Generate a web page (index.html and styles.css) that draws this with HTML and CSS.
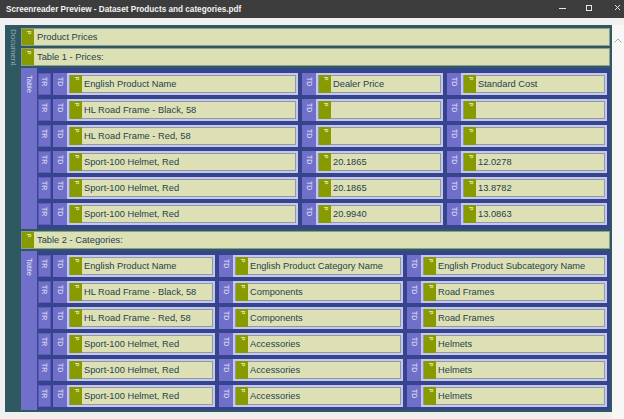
FILE: index.html
```html
<!DOCTYPE html>
<html>
<head>
<meta charset="utf-8">
<link rel="stylesheet" href="styles.css">
</head>
<body>
<div class="titlebar">
  <span class="title">Screenreader Preview - Dataset Products and categories.pdf</span>
  <svg class="controls" width="80" height="18" viewBox="0 0 80 18">
    <line x1="15" y1="8.5" x2="22" y2="8.5" stroke="#e6e6e6" stroke-width="1"/>
    <rect x="42.5" y="5.5" width="5" height="5" fill="none" stroke="#e6e6e6" stroke-width="1"/>
    <path d="M71 5 L76 10 M76 5 L71 10" stroke="#e6e6e6" stroke-width="1"/>
  </svg>
</div>
<div class="workspace">
  <div class="docwrap">
    <div class="doc">
      <div class="vlabel doc-label"><span>Document</span></div>
      <div class="doc-body">
        <div class="para"><span class="pi"><span>P</span></span><span class="ptext">Product Prices</span></div>
        <div class="para"><span class="pi"><span>P</span></span><span class="ptext">Table 1 - Prices:</span></div>
        <div class="table t1">
          <div class="vlabel tlabel"><span>Table</span></div>
          <div class="rows">
            <div class="tr"><div class="vlabel trlabel"><span>TR</span></div>
              <div class="td c1"><div class="vlabel tdlabel"><span>TD</span></div><div class="cell"><span class="pi"><span>P</span></span><span class="ctext">English Product Name</span></div></div>
              <div class="td c2"><div class="vlabel tdlabel"><span>TD</span></div><div class="cell"><span class="pi"><span>P</span></span><span class="ctext">Dealer Price</span></div></div>
              <div class="td c3"><div class="vlabel tdlabel"><span>TD</span></div><div class="cell"><span class="pi"><span>P</span></span><span class="ctext">Standard Cost</span></div></div>
            </div>
            <div class="tr"><div class="vlabel trlabel"><span>TR</span></div>
              <div class="td c1"><div class="vlabel tdlabel"><span>TD</span></div><div class="cell"><span class="pi"><span>P</span></span><span class="ctext">HL Road Frame - Black, 58</span></div></div>
              <div class="td c2"><div class="vlabel tdlabel"><span>TD</span></div><div class="cell"><span class="pi"><span>P</span></span><span class="ctext"></span></div></div>
              <div class="td c3"><div class="vlabel tdlabel"><span>TD</span></div><div class="cell"><span class="pi"><span>P</span></span><span class="ctext"></span></div></div>
            </div>
            <div class="tr"><div class="vlabel trlabel"><span>TR</span></div>
              <div class="td c1"><div class="vlabel tdlabel"><span>TD</span></div><div class="cell"><span class="pi"><span>P</span></span><span class="ctext">HL Road Frame - Red, 58</span></div></div>
              <div class="td c2"><div class="vlabel tdlabel"><span>TD</span></div><div class="cell"><span class="pi"><span>P</span></span><span class="ctext"></span></div></div>
              <div class="td c3"><div class="vlabel tdlabel"><span>TD</span></div><div class="cell"><span class="pi"><span>P</span></span><span class="ctext"></span></div></div>
            </div>
            <div class="tr"><div class="vlabel trlabel"><span>TR</span></div>
              <div class="td c1"><div class="vlabel tdlabel"><span>TD</span></div><div class="cell"><span class="pi"><span>P</span></span><span class="ctext">Sport-100 Helmet, Red</span></div></div>
              <div class="td c2"><div class="vlabel tdlabel"><span>TD</span></div><div class="cell"><span class="pi"><span>P</span></span><span class="ctext">20.1865</span></div></div>
              <div class="td c3"><div class="vlabel tdlabel"><span>TD</span></div><div class="cell"><span class="pi"><span>P</span></span><span class="ctext">12.0278</span></div></div>
            </div>
            <div class="tr"><div class="vlabel trlabel"><span>TR</span></div>
              <div class="td c1"><div class="vlabel tdlabel"><span>TD</span></div><div class="cell"><span class="pi"><span>P</span></span><span class="ctext">Sport-100 Helmet, Red</span></div></div>
              <div class="td c2"><div class="vlabel tdlabel"><span>TD</span></div><div class="cell"><span class="pi"><span>P</span></span><span class="ctext">20.1865</span></div></div>
              <div class="td c3"><div class="vlabel tdlabel"><span>TD</span></div><div class="cell"><span class="pi"><span>P</span></span><span class="ctext">13.8782</span></div></div>
            </div>
            <div class="tr"><div class="vlabel trlabel"><span>TR</span></div>
              <div class="td c1"><div class="vlabel tdlabel"><span>TD</span></div><div class="cell"><span class="pi"><span>P</span></span><span class="ctext">Sport-100 Helmet, Red</span></div></div>
              <div class="td c2"><div class="vlabel tdlabel"><span>TD</span></div><div class="cell"><span class="pi"><span>P</span></span><span class="ctext">20.9940</span></div></div>
              <div class="td c3"><div class="vlabel tdlabel"><span>TD</span></div><div class="cell"><span class="pi"><span>P</span></span><span class="ctext">13.0863</span></div></div>
            </div>
          </div>
        </div>
        <div class="para"><span class="pi"><span>P</span></span><span class="ptext">Table 2 - Categories:</span></div>
        <div class="table t2">
          <div class="vlabel tlabel"><span>Table</span></div>
          <div class="rows">
            <div class="tr"><div class="vlabel trlabel"><span>TR</span></div>
              <div class="td c1"><div class="vlabel tdlabel"><span>TD</span></div><div class="cell"><span class="pi"><span>P</span></span><span class="ctext">English Product Name</span></div></div>
              <div class="td c2"><div class="vlabel tdlabel"><span>TD</span></div><div class="cell"><span class="pi"><span>P</span></span><span class="ctext">English Product Category Name</span></div></div>
              <div class="td c3"><div class="vlabel tdlabel"><span>TD</span></div><div class="cell"><span class="pi"><span>P</span></span><span class="ctext">English Product Subcategory Name</span></div></div>
            </div>
            <div class="tr"><div class="vlabel trlabel"><span>TR</span></div>
              <div class="td c1"><div class="vlabel tdlabel"><span>TD</span></div><div class="cell"><span class="pi"><span>P</span></span><span class="ctext">HL Road Frame - Black, 58</span></div></div>
              <div class="td c2"><div class="vlabel tdlabel"><span>TD</span></div><div class="cell"><span class="pi"><span>P</span></span><span class="ctext">Components</span></div></div>
              <div class="td c3"><div class="vlabel tdlabel"><span>TD</span></div><div class="cell"><span class="pi"><span>P</span></span><span class="ctext">Road Frames</span></div></div>
            </div>
            <div class="tr"><div class="vlabel trlabel"><span>TR</span></div>
              <div class="td c1"><div class="vlabel tdlabel"><span>TD</span></div><div class="cell"><span class="pi"><span>P</span></span><span class="ctext">HL Road Frame - Red, 58</span></div></div>
              <div class="td c2"><div class="vlabel tdlabel"><span>TD</span></div><div class="cell"><span class="pi"><span>P</span></span><span class="ctext">Components</span></div></div>
              <div class="td c3"><div class="vlabel tdlabel"><span>TD</span></div><div class="cell"><span class="pi"><span>P</span></span><span class="ctext">Road Frames</span></div></div>
            </div>
            <div class="tr"><div class="vlabel trlabel"><span>TR</span></div>
              <div class="td c1"><div class="vlabel tdlabel"><span>TD</span></div><div class="cell"><span class="pi"><span>P</span></span><span class="ctext">Sport-100 Helmet, Red</span></div></div>
              <div class="td c2"><div class="vlabel tdlabel"><span>TD</span></div><div class="cell"><span class="pi"><span>P</span></span><span class="ctext">Accessories</span></div></div>
              <div class="td c3"><div class="vlabel tdlabel"><span>TD</span></div><div class="cell"><span class="pi"><span>P</span></span><span class="ctext">Helmets</span></div></div>
            </div>
            <div class="tr"><div class="vlabel trlabel"><span>TR</span></div>
              <div class="td c1"><div class="vlabel tdlabel"><span>TD</span></div><div class="cell"><span class="pi"><span>P</span></span><span class="ctext">Sport-100 Helmet, Red</span></div></div>
              <div class="td c2"><div class="vlabel tdlabel"><span>TD</span></div><div class="cell"><span class="pi"><span>P</span></span><span class="ctext">Accessories</span></div></div>
              <div class="td c3"><div class="vlabel tdlabel"><span>TD</span></div><div class="cell"><span class="pi"><span>P</span></span><span class="ctext">Helmets</span></div></div>
            </div>
            <div class="tr"><div class="vlabel trlabel"><span>TR</span></div>
              <div class="td c1"><div class="vlabel tdlabel"><span>TD</span></div><div class="cell"><span class="pi"><span>P</span></span><span class="ctext">Sport-100 Helmet, Red</span></div></div>
              <div class="td c2"><div class="vlabel tdlabel"><span>TD</span></div><div class="cell"><span class="pi"><span>P</span></span><span class="ctext">Accessories</span></div></div>
              <div class="td c3"><div class="vlabel tdlabel"><span>TD</span></div><div class="cell"><span class="pi"><span>P</span></span><span class="ctext">Helmets</span></div></div>
            </div>
          </div>
        </div>
      </div>
    </div>
  </div>
  <div class="scroll">
    <svg width="12" height="30" viewBox="0 0 12 30"><path d="M2.5 17.5 L6 14 L9.5 17.5" fill="none" stroke="#a8a8a8" stroke-width="1"/></svg>
  </div>
</div>
</body>
</html>
```

FILE: styles.css
```css
* { box-sizing: border-box; margin: 0; padding: 0; }
html, body { width: 624px; height: 419px; overflow: hidden; }
body { background: #f0f0f0; font-family: "Liberation Sans", Arial, sans-serif; }

.titlebar { height: 18px; background: #3d3d3d; color: #f2f2f2; display: flex; align-items: center; padding-left: 6px; }
.title { flex: 1; font-size: 8.2px; font-weight: bold; white-space: nowrap; }
.controls { display: block; flex: none; }

.workspace { display: flex; height: 401px; }
.docwrap { padding: 7px 0 0 5px; }
.doc { width: 607px; height: 387px; background: #2f5860; display: flex; }
.scroll { width: 12px; margin-top: 7px; background: #f7f7f7; height: 394px; }
.scroll svg { display: block; }

.vlabel { display: flex; justify-content: center; align-items: flex-start; flex: none; }
.vlabel span { writing-mode: vertical-rl; line-height: 1; }

.doc-label { width: 16px; padding-top: 4px; font-size: 8px; color: #8eaeb4; }
.doc-body { flex: 1; padding: 3px 2px 2px 0; display: flex; flex-direction: column; gap: 2px; }

.para { height: 18px; border: 1px solid #8c9c96; background: #dce0b4; display: flex; align-items: center; flex: none; }
.pi { width: 12px; align-self: stretch; background: #879a00; display: flex; justify-content: center; padding-top: 2px; flex: none; }
.pi span { writing-mode: vertical-rl; font-size: 5px; line-height: 1; color: #eef2c8; font-weight: bold; }
.ptext { margin-left: 3px; font-size: 9.3px; color: #26424a; white-space: nowrap; }

.table { display: flex; background: #35448c; flex: none; }
.t1 { height: 161px; }
.t2 { height: 159px; }
.tlabel { width: 16px; background: #7070ca; padding-top: 7px; font-size: 7.5px; color: #e6e6f8; }
.rows { flex: 1; display: flex; flex-direction: column; gap: 4px; padding: 5px 3px 4px 1px; }
.t2 .rows { padding: 4px 3px 3px 1px; }

.tr { display: flex; height: 22px; }
.trlabel { width: 13px; margin-right: 2px; background: #7070ca; box-shadow: inset 0 0 0 1px #5c5cb6; padding-top: 4px; font-size: 7px; color: #e6e6f8; }
.td { display: flex; }
.td + .td { margin-left: 4px; }
.tdlabel { width: 14px; background: #7070ca; padding-top: 4px; font-size: 7px; color: #e6e6f8; }

.t1 .c1 { width: 245px; }
.t1 .c2 { width: 141px; }
.t2 .c1 { width: 162px; }
.t2 .c2 { width: 184px; }
.c3 { flex: 1; }

.cell { flex: 1; border: 2px solid #c5c7ee; background: #dce0b4; box-shadow: inset 0 0 0 1px #8e9ba3; display: flex; align-items: center; }
.cell .pi { margin-left: 1px; }
.ctext { margin-left: 2px; font-size: 9.3px; color: #26424a; white-space: nowrap; }
```
